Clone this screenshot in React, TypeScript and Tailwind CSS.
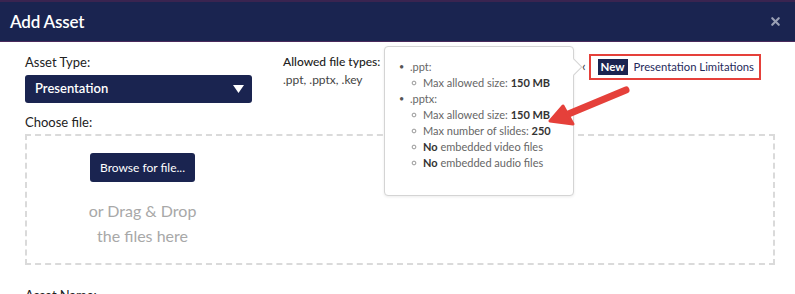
import { X } from 'lucide-react';

const FONT = "font-['Lato','Liberation_Sans',sans-serif]";

// Popover list: top level file types with their limits
const LIMITS = [
  { type: '.ppt:', items: [['Max allowed size: ', '150 MB', true]] },
  {
    type: '.pptx:',
    items: [
      ['Max allowed size: ', '150 MB', true],
      ['Max number of slides: ', '250', true],
      [' embedded video files', 'No', false],
      [' embedded audio files', 'No', false],
    ],
  },
] as const;

function LimitsPopover() {
  return (
    <div className="absolute left-[384px] top-[46px] w-[190px] h-[150px] bg-white border border-[#d4d4d4] rounded-[4px] shadow-[0_1px_3px_rgba(0,0,0,0.08)] z-10">
      {/* arrow pointing right */}
      <div className="absolute -right-[7px] top-[14px] w-[12px] h-[12px] bg-white border-t border-r border-[#d4d4d4] rotate-45" />
      <ul className="pt-[12px] pl-[14px] text-[11px] leading-[16px] text-[#666]">
        {LIMITS.map((group) => (
          <li key={group.type}>
            <div className="flex items-center">
              <span className="w-[11px] text-[9px] text-[#555]">•</span>
              <span>{group.type}</span>
            </div>
            <ul className="pl-[12px]">
              {group.items.map(([text, bold, after]) => (
                <li key={text + bold} className="flex items-center">
                  <span className="w-[6px] h-[6px] rounded-full border border-[#777] mr-[6px] scale-75" />
                  {after ? (
                    <span>
                      {text}
                      <b className="text-[#333] font-bold">{bold}</b>
                    </span>
                  ) : (
                    <span>
                      <b className="text-[#333] font-bold">{bold}</b>
                      {text}
                    </span>
                  )}
                </li>
              ))}
            </ul>
          </li>
        ))}
      </ul>
    </div>
  );
}

export default function App() {
  return (
    <div className={`relative w-[795px] h-[294px] overflow-hidden bg-white ${FONT}`}>
      {/* Header */}
      <div className="h-[42px] bg-[#1a2450] border-t-2 border-b border-t-[#3a2450] border-b-[#4a2a5c] flex items-center justify-between pl-[10px] pr-[13px]">
        <h1 className="text-white text-[17px] font-semibold tracking-[-0.2px]">Add Asset</h1>
        <X className="w-[13px] h-[13px] text-[#9aa0b4]" strokeWidth={4} />
      </div>

      <div className="pl-[25px] pr-[20px] pt-[12px]">
        {/* top row */}
        <div className="flex items-start">
          <div className="w-[227px]">
            <div className="text-[13px] text-[#222] leading-[16px]">Asset Type:</div>
            <div className="mt-[5px] h-[28px] bg-[#1a2450] rounded-[3px] flex items-center justify-between pl-[10px] pr-[8px]">
              <span className="text-white text-[13px] font-semibold">Presentation</span>
              <svg width="11" height="8" viewBox="0 0 11 8">
                <path d="M0 0h11L5.5 8z" fill="#fff" />
              </svg>
            </div>
          </div>
          <div className="ml-[31px]">
            <div className="text-[12px] text-[#222] leading-[16px] font-medium">Allowed file types:</div>
            <div className="text-[12px] text-[#444] leading-[16px] mt-[2px]">.ppt, .pptx, .key</div>
          </div>
          <div className="ml-auto mr-[14px] mt-0 flex items-center">
            <span className="text-[#333] text-[13px] mr-[3px]">‹</span>
            <div className="h-[26px] border-2 border-[#e5403a] flex items-center pl-[7px] pr-[5px]">
              <span className="bg-[#1a2450] text-white text-[11.5px] font-bold px-[3px] leading-[16px]">New</span>
              <span className="ml-[6px] text-[11.3px] text-[#1f2a5c]">Presentation Limitations</span>
            </div>
          </div>
        </div>

        {/* Choose file */}
        <div className="mt-[11px] text-[13px] text-[#222] leading-[16px]">Choose file:</div>
        <div className="mt-[4px] h-[131px] border-2 border-dashed border-[#dadada] flex flex-col items-start pl-[63px] pt-[17px]">
          <div className="w-[105px] h-[29px] bg-[#1a2450] rounded-[3px] flex items-center justify-center text-white text-[12px]">
            Browse for file...
          </div>
          <div className="w-[105px] mt-[16px] text-center text-[16px] leading-[25px] text-[#a8a8a8]">
            <div className="whitespace-nowrap -mx-[20px]">or Drag &amp; Drop</div>
            <div className="whitespace-nowrap -mx-[20px]">the files here</div>
          </div>
        </div>

        <div className="mt-[22px] text-[13px] text-[#222] leading-[16px]">Asset Name:</div>
      </div>

      <LimitsPopover />

      {/* red annotation arrow */}
      <svg className="absolute left-0 top-0 z-20 pointer-events-none" width="795" height="294">
        <line x1="626" y1="90" x2="566" y2="115" stroke="#e5403a" strokeWidth="7" strokeLinecap="round" />
        <path d="M550 121 L563 106 L573 124 Z" fill="#e5403a" stroke="#e5403a" strokeWidth="3" strokeLinejoin="round" />
      </svg>
    </div>
  );
}
